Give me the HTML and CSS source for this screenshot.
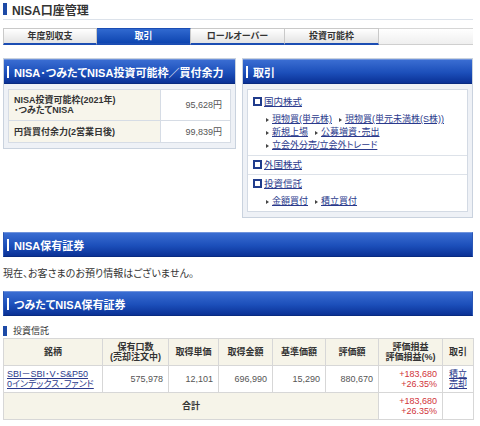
FILE: index.html
```html
<!DOCTYPE html>
<html lang="ja">
<head>
<meta charset="utf-8">
<title>NISA口座管理</title>
<link rel="stylesheet" href="styles.css">
</head>
<body>
<div class="page">
  <h1 class="page-title">NISA口座管理</h1>
  <div class="tabs">
    <div class="tab">年度別収支</div>
    <div class="tab active">取引</div>
    <div class="tab">ロールオーバー</div>
    <div class="tab">投資可能枠</div>
    <div class="tab-rest"></div>
  </div>

  <div class="columns">
    <section class="panel left">
      <h2 class="panel-head">NISA･つみたてNISA投資可能枠／買付余力</h2>
      <div class="panel-body">
        <table class="kv">
          <tr class="r1">
            <td class="label">NISA投資可能枠(2021年)<br>･つみたてNISA</td>
            <td class="value">95,628円</td>
          </tr>
          <tr class="r2">
            <td class="label">円貨買付余力(2営業日後)</td>
            <td class="value">99,839円</td>
          </tr>
        </table>
      </div>
    </section>

    <section class="panel right">
      <h2 class="panel-head">取引</h2>
      <div class="panel-body">
        <div class="trade-box">
          <div class="trade-sec first">
            <a class="cat" href="#">国内株式</a>
            <ul class="links">
              <li><a href="#">現物買(単元株)</a><a href="#">現物買(単元未満株(S株))</a></li>
              <li><a href="#">新規上場</a><a href="#">公募増資･売出</a></li>
              <li><a href="#">立会外分売/立会外トレード</a></li>
            </ul>
          </div>
          <div class="trade-sec">
            <a class="cat" href="#">外国株式</a>
          </div>
          <div class="trade-sec">
            <a class="cat" href="#">投資信託</a>
            <ul class="links">
              <li><a href="#">金額買付</a><a href="#">積立買付</a></li>
            </ul>
          </div>
        </div>
      </div>
    </section>
  </div>

  <h2 class="bar-head">NISA保有証券</h2>
  <p class="note">現在、お客さまのお預り情報はございません。</p>

  <h2 class="bar-head second">つみたてNISA保有証券</h2>
  <h3 class="sub-head">投資信託</h3>
  <table class="holdings">
    <colgroup>
      <col class="c1"><col class="c2"><col class="c3"><col class="c4"><col class="c5"><col class="c6"><col class="c7"><col class="c8">
    </colgroup>
    <tr>
      <th>銘柄</th>
      <th>保有口数<br>(売却注文中)</th>
      <th>取得単価</th>
      <th>取得金額</th>
      <th>基準価額</th>
      <th>評価額</th>
      <th>評価損益<br>評価損益(%)</th>
      <th>取引</th>
    </tr>
    <tr>
      <td class="name"><a href="#">SBI－SBI･V･S&amp;P50<br>0インデックス･ファンド</a></td>
      <td class="num">575,978</td>
      <td class="num">12,101</td>
      <td class="num">696,990</td>
      <td class="num">15,290</td>
      <td class="num">880,670</td>
      <td class="num red">+183,680<br>+26.35%</td>
      <td class="act"><a href="#">積立</a><br><a href="#">売却</a></td>
    </tr>
    <tr class="total">
      <td class="sum" colspan="6">合計</td>
      <td class="num red">+183,680<br>+26.35%</td>
      <td class="blank"></td>
    </tr>
  </table>
</div>
</body>
</html>
```
FILE: styles.css
```css
* { box-sizing: border-box; }

body {
  margin: 0;
  background: #fff;
  color: #333;
  font-family: "Liberation Sans", "Noto Sans CJK JP", sans-serif;
  font-size: 9px;
  font-feature-settings: "palt";
}

a { color: #2b3a8c; text-decoration: underline; }

.page {
  width: 470px;
  margin-left: 3px;
}

.page-title {
  margin: 0;
  height: 20px;
  border-bottom: 1px solid #dce2ea;
  display: flex;
  align-items: center;
  gap: 5px;
  font-size: 12px;
  font-weight: bold;
  color: #333;
  padding-bottom: 1px;
}
.page-title::before {
  content: "";
  width: 4px;
  height: 12px;
  background: #1d4aa6;
}

/* tabs */
.tabs {
  display: flex;
  margin-top: 8px;
  height: 17px;
}
.tab {
  width: 94px;
  border: 1px solid #c9c9c9;
  border-bottom: 2px solid #1b4db3;
  background: linear-gradient(#ffffff, #e3e3e3);
  text-align: center;
  font-size: 9px;
  font-weight: bold;
  line-height: 14px;
  color: #333;
}
.tab + .tab { border-left: none; }
.tab.active {
  background: linear-gradient(#3069d0, #0e45b0);
  color: #fff;
  border-top-color: #1b4db3;
}
.tab-rest {
  flex: 1;
  border-top: 1px solid #d6d6d6;
  border-bottom: 1px solid #cfcfcf;
  background: linear-gradient(#ffffff, #efefef);
}

/* panels */
.columns {
  display: flex;
  gap: 6px;
  align-items: flex-start;
  margin-top: 13px;
}
.panel {
  border: 1px solid #c9d2de;
  background: #eef1f6;
  padding-bottom: 5px;
}
.panel.left { width: 233px; }
.panel.right { flex: 1; }

.panel-head, .bar-head {
  margin: 0;
  height: 25px;
  background: linear-gradient(#3a6dd2, #1c4fba 55%, #0a3196);
  border-top: 1px solid #6f93dc;
  border-bottom: 1px solid #082a80;
  color: #fff;
  font-size: 11px;
  font-weight: bold;
  display: flex;
  align-items: center;
  gap: 5px;
  padding-left: 3px;
}
.panel-head::before, .bar-head::before {
  content: "";
  width: 2px;
  height: 12px;
  background: #fff;
}

.panel-body { padding: 5px 4px 0; }

.kv {
  width: 100%;
  border-collapse: collapse;
  border: 1px solid #d6dce5;
}
.kv td {
  border: 1px solid #d6dce5;
  line-height: 10px;
}
.kv .r1 td { height: 31px; }
.kv .r2 td { height: 22px; }
.kv .label {
  background: #f7f5eb;
  font-weight: bold;
  padding: 0 5px;
  color: #333;
}
.kv .value {
  width: 70px;
  background: #fff;
  text-align: right;
  padding-right: 8px;
  color: #555;
}

/* trade box */
.trade-box {
  background: #fff;
  border: 1px solid #d3dae4;
}
.trade-sec {
  padding: 2px 5px 3px;
  border-top: 1px solid #dde2e9;
}
.trade-sec.first { border-top: none; padding-top: 5px; }
.cat {
  display: flex;
  align-items: center;
  gap: 2px;
  line-height: 13px;
  font-size: 9.5px;
  width: max-content;
}
.cat::before {
  content: "";
  width: 5px;
  height: 5px;
  border: 2px solid #203c8c;
  background: #fff;
}
.links {
  list-style: none;
  margin: 5px 0 0;
  padding: 0 0 0 13px;
}
.links li {
  display: flex;
  gap: 7px;
  line-height: 13px;
}
.links a {
  display: flex;
  align-items: center;
  gap: 3px;
}
.links a::before {
  content: "";
  border-left: 3px solid #444;
  border-top: 2.5px solid transparent;
  border-bottom: 2.5px solid transparent;
}

/* holdings */
.bar-head { margin-top: 14px; border-left: 1px solid #2a56b5; border-right: 1px solid #2a56b5; }
.bar-head.second { margin-top: 10px; }

.note {
  margin: 10px 0 0;
  font-size: 10px;
  line-height: 14px;
  color: #333;
}

.sub-head {
  margin: 8px 0 0;
  font-size: 9px;
  font-weight: normal;
  line-height: 14px;
  display: flex;
  align-items: center;
  gap: 6px;
  color: #333;
}
.sub-head::before {
  content: "";
  width: 4px;
  height: 10px;
  background: #1d4aa6;
}

.holdings {
  width: 470px;
  border-collapse: collapse;
  table-layout: fixed;
  border: 1px solid #d5d5d5;
}
.holdings .c1 { width: 99px; }
.holdings .c2 { width: 66px; }
.holdings .c3 { width: 50px; }
.holdings .c4 { width: 54px; }
.holdings .c5 { width: 53px; }
.holdings .c6 { width: 53px; }
.holdings .c7 { width: 64px; }
.holdings .c8 { width: 31px; }
.holdings th, .holdings td {
  border: 1px solid #d7d7d7;
  height: 27px;
  line-height: 10px;
  padding: 0;
}
.holdings th {
  background: #f6f4e9;
  font-weight: bold;
  color: #333;
  text-align: center;
}
.holdings td { background: #fff; }
.holdings .name { padding-left: 3px; white-space: nowrap; }
.holdings .num {
  text-align: right;
  padding-right: 5px;
  color: #555;
}
.holdings .red { color: #d1343a; }
.holdings .act { padding-left: 6px; }
.holdings .sum {
  background: #f6f4e9;
  text-align: center;
  font-weight: bold;
}
```
